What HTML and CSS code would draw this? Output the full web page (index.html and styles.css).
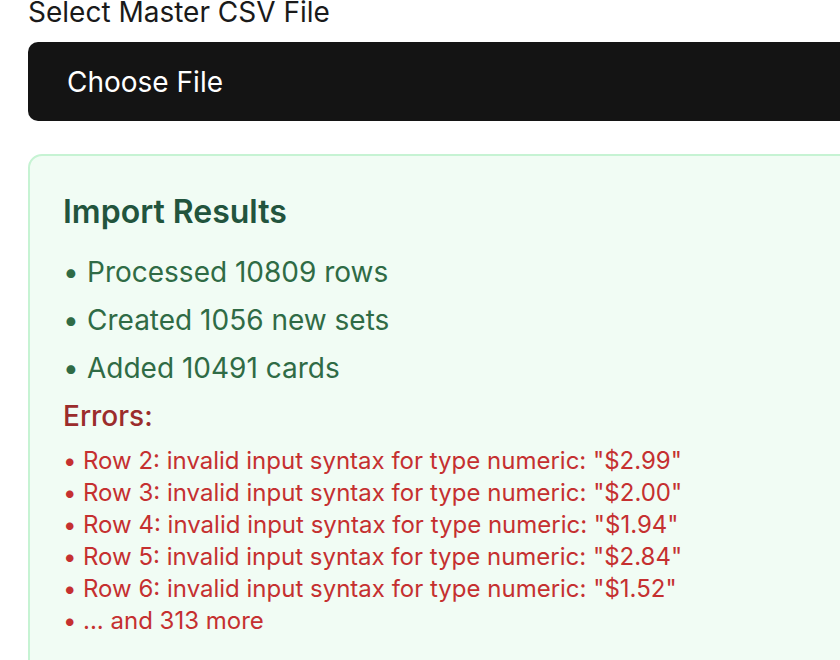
FILE: index.html
```html
<!DOCTYPE html>
<html>
<head>
<meta charset="utf-8">
<link rel="stylesheet" href="styles.css">
</head>
<body>
<div class="page">
  <label class="label">Select Master CSV File</label>
  <div class="file-btn">Choose File</div>
  <section class="results">
    <h2 class="results-title">Import Results</h2>
    <ul class="summary">
      <li>Processed 10809 rows</li>
      <li>Created 1056 new sets</li>
      <li>Added 10491 cards</li>
    </ul>
    <h3 class="errors-title">Errors:</h3>
    <ul class="errors">
      <li>Row 2: invalid input syntax for type numeric: "$2.99"</li>
      <li>Row 3: invalid input syntax for type numeric: "$2.00"</li>
      <li>Row 4: invalid input syntax for type numeric: "$1.94"</li>
      <li>Row 5: invalid input syntax for type numeric: "$2.84"</li>
      <li>Row 6: invalid input syntax for type numeric: "$1.52"</li>
      <li>... and 313 more</li>
    </ul>
  </section>
</div>
</body>
</html>
```
FILE: styles.css
```css
html, body {
  margin: 0;
  padding: 0;
  background: #ffffff;
  overflow: hidden;
}
body {
  font-family: Inter, "Noto Sans", sans-serif;
  width: 840px;
  height: 660px;
}
.page {
  margin-top: -9px;
  padding-left: 28px;
  width: 1100px;
}
.label {
  display: block;
  font-size: 28px;
  line-height: 42px;
  color: #1a1a1a;
  margin-bottom: 9px;
}
.file-btn {
  height: 79px;
  background: #141414;
  border-radius: 10px;
  color: #ffffff;
  font-size: 28px;
  display: flex;
  align-items: center;
  padding-left: 39px;
}
.results {
  margin-top: 33px;
  background: #f1fcf4;
  border: 2px solid #c6f3d3;
  border-radius: 14px;
  padding: 34px 33px 40px;
  min-height: 600px;
}
.results-title {
  margin: 0 0 17px;
  font-size: 32px;
  line-height: 44px;
  font-weight: 600;
  color: #22543d;
}
.summary {
  list-style: none;
  margin: 0;
  padding: 0;
}
.summary li {
  font-size: 28px;
  line-height: 42px;
  color: #2f6b45;
  margin-bottom: 6px;
  display: flex;
}
.summary li::before {
  content: "•";
  width: 24px;
  flex: none;
}
.errors-title {
  margin: 2px 0 8px;
  font-size: 28px;
  line-height: 42px;
  font-weight: 500;
  color: #9b2c2c;
}
.errors {
  list-style: none;
  margin: 0;
  padding: 0;
}
.errors li {
  font-size: 24px;
  line-height: 32px;
  color: #c53030;
  display: flex;
}
.errors li::before {
  content: "•";
  width: 20px;
  flex: none;
}
```
